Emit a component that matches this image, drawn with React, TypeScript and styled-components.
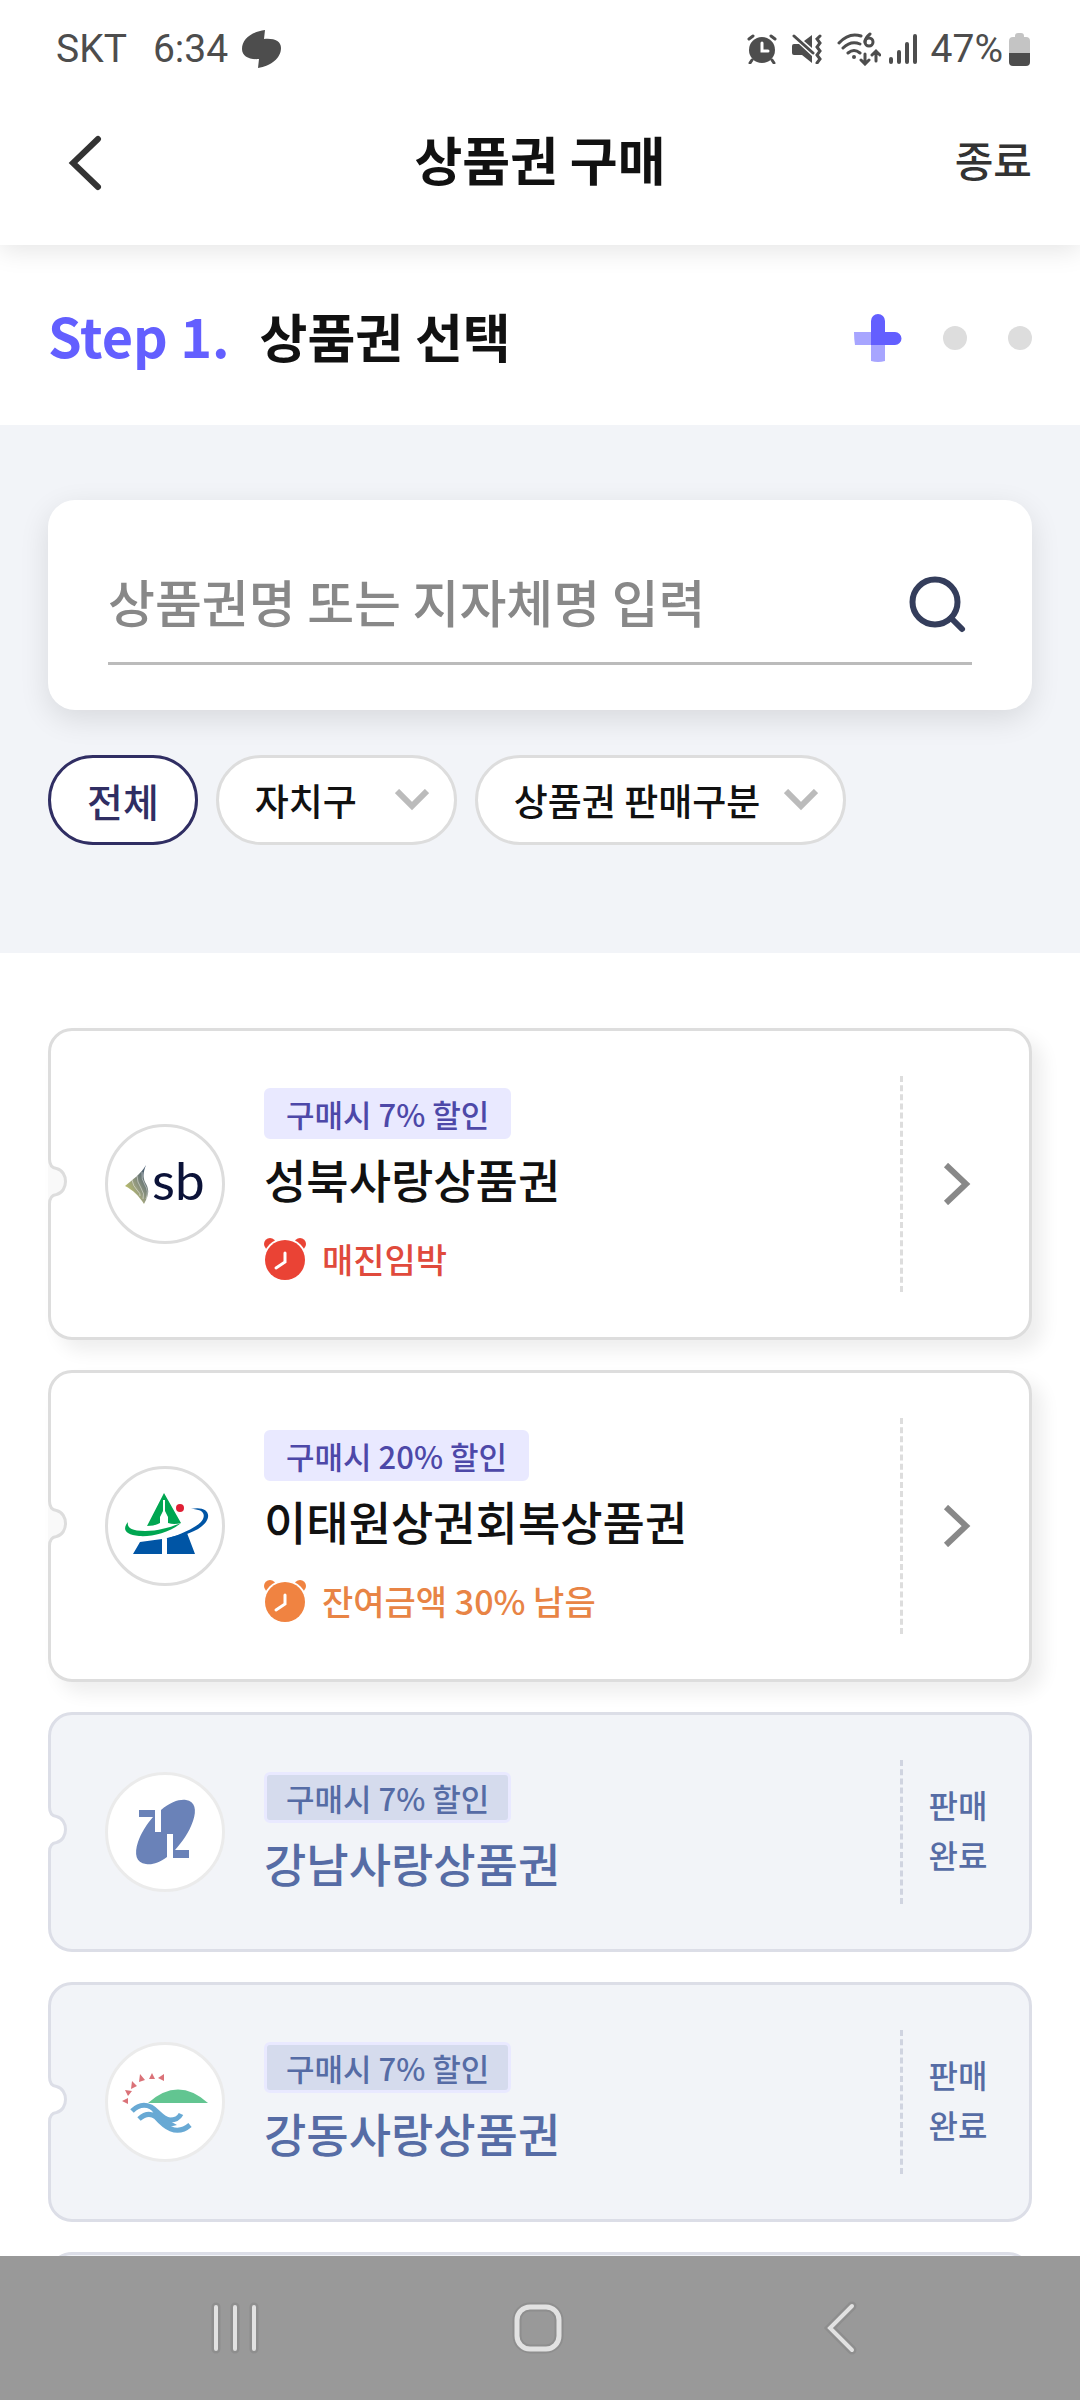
import React from "react";
import styled, { createGlobalStyle, css } from "styled-components";

const GlobalStyle = createGlobalStyle`
  *, *::before, *::after { box-sizing: border-box; }
  body {
    margin: 0;
    background: #fff;
    color: #111;
    font-family: "Noto Sans CJK KR", "Noto Sans", sans-serif;
    font-weight: 500;
  }
  button, input, select { font: inherit; color: inherit; }
  h1, h2, h3, p, ul, ol { margin: 0; padding: 0; font-weight: inherit; }
  svg { display: block; flex: none; }
`;

const Screen = styled.div`
  display: flex;
  flex-direction: column;
  height: 100vh;
  overflow: hidden;
`;

const TopArea = styled.header`
  flex: none;
  position: relative;
  z-index: 1;
  background: #fff;
  box-shadow: 0 6px 24px rgba(0, 0, 0, 0.1);
`;

const StatusBar = styled.div`
  display: flex;
  align-items: center;
  justify-content: space-between;
  height: 98px;
  padding: 0 50px 0 56px;
  color: #4d4d4d;
  font-family: Roboto, sans-serif;
  font-weight: 400;
  font-size: 39px;
  line-height: 48px;
`;

const StatusGroup = styled.div<{ $gap: number }>`
  display: flex;
  align-items: center;
  gap: ${(p) => p.$gap}px;
`;

const TitleBar = styled.div`
  display: grid;
  grid-template-columns: 1fr auto 1fr;
  align-items: center;
  height: 147px;
  padding: 0 48px 26px;
`;

const PlainButton = styled.button`
  display: flex;
  align-items: center;
  padding: 0;
  border: 0;
  background: none;
  cursor: pointer;
`;

const BackButton = styled(PlainButton)`
  justify-self: start;
  padding: 8px 20px 0;
`;

const CloseButton = styled(PlainButton)`
  justify-self: end;
  color: #333;
  font-size: 42px;
  line-height: 60px;
`;

const PageTitle = styled.h1`
  font-size: 52px;
  font-weight: 700;
  line-height: 72px;
`;

const StepBar = styled.section`
  flex: none;
  display: flex;
  align-items: center;
  justify-content: space-between;
  height: 180px;
  padding: 0 48px;
`;

const StepTitle = styled.h2`
  display: flex;
  align-items: baseline;
  gap: 30px;
  font-size: 52px;
  font-weight: 700;
  line-height: 72px;
`;

const StepNumber = styled.span`
  color: #635fff;
  font-size: 54px;
`;

const StepDots = styled.div`
  display: flex;
  align-items: center;
  gap: 41px;
  padding-top: 6px;
`;

const Dot = styled.span`
  width: 24px;
  height: 24px;
  border-radius: 50%;
  background: #ddd;
`;

const SearchArea = styled.section`
  flex: none;
  display: flex;
  flex-direction: column;
  gap: 45px;
  padding: 75px 48px 108px;
  background: #f2f4f8;
`;

const SearchCard = styled.form`
  padding: 39px 60px 45px;
  border-radius: 27px;
  background: #fff;
  box-shadow: 0 9px 30px rgba(0, 0, 0, 0.11);
`;

const SearchField = styled.div`
  display: flex;
  align-items: center;
  height: 126px;
  border-bottom: 3px solid #bbb;
`;

const SearchInput = styled.input`
  flex: 1;
  min-width: 0;
  height: 76px;
  padding: 0;
  border: 0;
  outline: 0;
  background: none;
  font-size: 51px;
  &::placeholder { color: #888; opacity: 1; }
`;

const SearchButton = styled(PlainButton)`
  padding-top: 8px;
`;

const Chips = styled.div`
  display: flex;
  gap: 18px;
`;

const chip = css`
  height: 90px;
  border: 3px solid #ddd;
  border-radius: 45px;
  background: #fff;
  line-height: 60px;
`;

const AllChip = styled.button`
  ${chip}
  padding: 0 36px;
  border-color: #302e63;
  color: #302e63;
  font-size: 39px;
`;

const SelectWrap = styled.div`
  display: grid;
  align-items: center;
  > * { grid-area: 1 / 1; }
  > svg { justify-self: end; margin-right: 28px; pointer-events: none; }
`;

const ChipSelect = styled.select<{ $room: number }>`
  ${chip}
  appearance: none;
  padding: 0 ${(p) => p.$room}px 0 36px;
  color: #111;
  font-size: 37px;
`;

const List = styled.ul`
  flex: 1;
  min-height: 0;
  overflow: hidden;
  display: flex;
  flex-direction: column;
  gap: 30px;
  padding: 75px 48px 0;
  list-style: none;
`;

const Row = styled.li`
  flex: none;
`;

const Ticket = styled.a<{ $sold?: boolean }>`
  position: relative;
  display: flex;
  align-items: center;
  min-height: ${(p) => (p.$sold ? 240 : 312)}px;
  padding: 45px 0 45px 54px;
  border: 3px solid ${(p) => (p.$sold ? "#dcdee7" : "#ddd")};
  border-radius: 24px;
  background: ${(p) => (p.$sold ? "#f2f4f8" : "#fff")};
  box-shadow: ${(p) => (p.$sold ? "none" : "11px 11px 18px rgba(0, 0, 0, 0.07)")};
  color: ${(p) => (p.$sold ? "#566ca5" : "#111")};
  text-decoration: none;
`;

const Notch = styled.svg`
  position: absolute;
  left: -3px;
  top: 50%;
  margin-top: -26px;
`;

const Logo = styled.div<{ $sold?: boolean }>`
  flex: none;
  width: 120px;
  height: 120px;
  border: 3px solid ${(p) => (p.$sold ? "#ebebeb" : "#ddd")};
  border-radius: 50%;
  background: #fff;
  overflow: hidden;
  > svg { margin: -3px; }
`;

const Info = styled.div`
  flex: 1;
  min-width: 0;
  display: flex;
  flex-direction: column;
  align-items: flex-start;
  padding-left: 39px;
`;

const Badge = styled.span<{ $sold?: boolean }>`
  height: 51px;
  padding: 0 19px;
  border: 3px solid #e9e9ff;
  border-radius: 6px;
  background: ${(p) => (p.$sold ? "#d5dbed" : "#e9e9ff")};
  color: ${(p) => (p.$sold ? "#566ca5" : "#4d48a8")};
  font-size: 31px;
  line-height: 45px;
`;

const Name = styled.h3`
  margin-top: 9px;
  font-size: 46px;
  line-height: 60px;
`;

const Remain = styled.p<{ $color: string }>`
  display: flex;
  align-items: center;
  gap: 16px;
  margin-top: 30px;
  color: ${(p) => p.$color};
  font-size: 34px;
  line-height: 42px;
`;

const Side = styled.div<{ $sold?: boolean }>`
  align-self: stretch;
  flex: none;
  display: flex;
  align-items: center;
  justify-content: center;
  width: 129px;
  padding-right: 16px;
  border-left: 3px dashed ${(p) => (p.$sold ? "#d0d4e0" : "#ddd")};
  text-align: center;
`;

const SoldText = styled.span`
  padding-bottom: 6px;
  font-size: 32px;
  line-height: 50px;
`;

const NavBar = styled.nav`
  flex: none;
  position: relative;
  display: flex;
  height: 144px;
  padding: 0 87px 0 83px;
  background: #999;
`;

const NavButton = styled(PlainButton)`
  flex: 1;
  justify-content: center;
`;

const AppMark = () => (
  <svg width="39" height="38" viewBox="0 0 39 38" fill="#4d4d4d">
    <path d="M23 0C9 2 0 9 0 19c0 7 7 11 17 10l-1 9c13-2 23-10 23-20 0-7-7-10-17-9z" />
  </svg>
);

const AlarmStatus = () => (
  <svg width="30" height="30" viewBox="0 0 30 30" fill="none" stroke="#4d4d4d" strokeLinecap="round">
    <circle cx="15" cy="16" r="13" fill="#4d4d4d" stroke="none" />
    <path d="M2 5l4-3M28 5l-4-3M5 26l-2 3M25 26l2 3" strokeWidth="3" />
    <path d="M15 9v8h6" stroke="#fff" strokeWidth="3" />
  </svg>
);

const MuteStatus = () => (
  <svg width="30" height="30" viewBox="0 0 30 30" fill="#4d4d4d">
    <path d="M0 12q0-2 2-2h5l13 12v7l-10-8H2q-2 0-2-2zM20 1v13l-8-7z" />
    <path d="M2 2l19 17M28 2l-3 3 3 4-3 4 3 4-3 4 3 4-3 4" fill="none" stroke="#4d4d4d" strokeWidth="3" strokeLinecap="round" />
  </svg>
);

const WifiStatus = () => (
  <svg width="44" height="34" viewBox="0 0 44 34" fill="none" stroke="#4d4d4d" strokeWidth="3" strokeLinecap="round">
    <path d="M2 11Q12 0 24 4M6 16q8-8 17-4M11 21q6-5 12 0" />
    <circle cx="17" cy="25" r="2" fill="#4d4d4d" stroke="none" />
    <path d="M33 2q-5 4-5 8" />
    <circle cx="32" cy="10" r="4" />
    <path d="M28 22v9M24 28l4 4 4-4M39 29v-9M35 23l4-4 4 4" />
  </svg>
);

const SignalStatus = () => (
  <svg width="28" height="30" viewBox="0 0 28 30" stroke="#4d4d4d" strokeWidth="4" strokeLinecap="round">
    <path d="M2 25v3M10 18v10M18 10v18M26 2v26" />
  </svg>
);

const BatteryStatus = () => (
  <svg width="21" height="33" viewBox="0 0 21 33">
    <path d="M6 3q0-3 3-3h3q3 0 3 3v1h2q4 0 4 4v13H0V8q0-4 4-4h2z" fill="#c4c4c4" />
    <path d="M0 20h21v9q0 4-4 4H4q-4 0-4-4z" fill="#4d4d4d" />
  </svg>
);

const BackArrow = () => (
  <svg width="34" height="56" viewBox="0 0 34 56" fill="none" stroke="#333" strokeWidth="6" strokeLinecap="round">
    <path d="M30 4L5 28l25 24" />
  </svg>
);

const PlusMark = () => (
  <svg width="48" height="48" viewBox="0 0 48 48">
    <path d="M0 18h24v13H1q-1-6-1-13zM17 24h14v23q-7 2-14 0z" fill="#a7a5ff" />
    <path d="M17 7a7 7 0 0 1 14 0v11h10a6 6 0 0 1 0 13H17z" fill="#635fff" />
  </svg>
);

const SearchIcon = () => (
  <svg width="64" height="60" viewBox="0 0 64 60" fill="none" stroke="#343d5b" strokeWidth="6">
    <circle cx="27" cy="27" r="22.5" />
    <path d="M43 43l11 11" strokeLinecap="round" />
  </svg>
);

const ChipArrow = () => (
  <svg width="34" height="22" viewBox="0 0 34 22" fill="none" stroke="#bbb" strokeWidth="6">
    <path d="M2 2l15 15L32 2" />
  </svg>
);

const RowArrow = () => (
  <svg width="32" height="42" viewBox="0 0 32 42" fill="none" stroke="#888" strokeWidth="6">
    <path d="M4 2l20 19L4 40" />
  </svg>
);

const AlarmClock = ({ color }: { color: string }) => (
  <svg width="42" height="42" viewBox="0 0 42 42">
    <circle cx="6" cy="6" r="6" fill={color} />
    <circle cx="36" cy="6" r="6" fill={color} />
    <circle cx="21" cy="22" r="22" fill="#fff" />
    <circle cx="21" cy="22" r="20" fill={color} />
    <path d="M21 15v9l-9 6" fill="none" stroke="#fff" strokeWidth="3" strokeLinecap="round" />
  </svg>
);

const CardNotch = ({ sold }: { sold?: boolean }) => (
  <Notch width="22" height="48" viewBox="0 0 22 48">
    <path
      d="M0 1h1.500c0 6 3 9 7 9.500 12 3 12 23 0 26-4 .5-7 3.500-7 9.500H0z"
      fill={sold ? "#fff" : "#f9f9f9"}
    />
    <path
      d="M1.500 0v1c0 6 3 9 7 9.500 12 3 12 23 0 26-4 .5-7 3.500-7 9.500v2"
      fill="none"
      stroke={sold ? "#dcdee7" : "#ddd"}
      strokeWidth="3"
    />
  </Notch>
);

const SeongbukLogo = () => (
  <svg width="120" height="120" viewBox="0 0 120 120">
    <defs>
      <linearGradient id="leaf" x1="0" y1="1" x2="1" y2="0">
        <stop offset="0" stopColor="#d5d94e" />
        <stop offset="0.45" stopColor="#9a9f80" />
        <stop offset="1" stopColor="#2c4468" />
      </linearGradient>
    </defs>
    <path d="M41 41c-5 9-14 15-21 21 8 4 14 10 19 18 6-11 5-15 1-22-2-5-2-9 1-17z" fill="url(#leaf)" />
    <path d="M37 48q-1 7 3 13t1 14M32 52q0 6 4 12t2 11M27 56q1 6 5 10t3 6" fill="none" stroke="#fff" strokeOpacity="0.45" />
    <text x="47" y="76" fontFamily="Lato, sans-serif" fontSize="53" fontWeight="400" fill="#0b1238">sb</text>
  </svg>
);

const ItaewonLogo = () => (
  <svg width="120" height="120" viewBox="0 0 120 120">
    <path d="M59 27L42 60q8 0 13-3V51l3-6V34h2v11l3 6v6q6 2 13 0z" fill="#00a651" />
    <path d="M23 56c-1 5 2 9 17 9 14 0 26-4 36-8-12 10-30 14-42 13-14-1-17-7-11-14z" fill="#00a651" />
    <path d="M86 43c14-3 21 4 15 13-6 8-20 14-40 17 22-7 34-14 37-20 3-7-3-10-12-10z" fill="#0055a5" />
    <path d="M35 76l22-3v15H28zM62 72l20-5 8 21H62z" fill="#0055a5" />
    <circle cx="75" cy="42" r="4" fill="#e01f35" />
  </svg>
);

const GangnamLogo = () => (
  <svg width="120" height="120" viewBox="0 0 120 120">
    <path
      d="M56 38c9-8 19-11 25-10 9 1 11 10 7 21-4 12-11 21-18 29h14v8H68V62h-6v23c-8 6-15 8-21 7-10-1-12-10-8-22 3-9 9-18 15-25H34v-7h16v22h6z"
      fill="#6a82b8"
    />
  </svg>
);

const GangdongLogo = () => (
  <svg width="120" height="120" viewBox="0 0 120 120">
    <path d="M43 61q30-27 60 0z" fill="#62c591" />
    <path d="M17 59l6-3v6zM20 48l7 1-4 5zM27 39l5 5-6 3zM35 32l5 6-6 2zM47 31l3 6h-6zM59 32v7l-6-3z" fill="#da7278" />
    <path d="M27 69q9-9 19-4c7 4 11 12 19 13q8 0 11-6M34 77q9-8 17-2c8 9 20 20 34 8" fill="none" stroke="#68a9d4" strokeWidth="5" />
    <path d="M44 63l12 11 16 9-8 2-14-11z" fill="#68a9d4" />
  </svg>
);

type Voucher = {
  name: string;
  rate: string;
  logo: React.ReactNode;
  remain?: { text: string; textColor: string; iconColor: string };
};

const vouchers: Voucher[] = [
  {
    name: "성북사랑상품권",
    rate: "7%",
    logo: <SeongbukLogo />,
    remain: { text: "매진임박", textColor: "#e04a3c", iconColor: "#ea4335" },
  },
  {
    name: "이태원상권회복상품권",
    rate: "20%",
    logo: <ItaewonLogo />,
    remain: { text: "잔여금액 30% 남음", textColor: "#e88445", iconColor: "#f08341" },
  },
  { name: "강남사랑상품권", rate: "7%", logo: <GangnamLogo /> },
  { name: "강동사랑상품권", rate: "7%", logo: <GangdongLogo /> },
];

const VoucherCard = ({ voucher }: { voucher: Voucher }) => {
  const sold = !voucher.remain;
  return (
    <Ticket $sold={sold} as={sold ? "div" : "a"} href={sold ? undefined : "#"}>
      <CardNotch sold={sold} />
      <Logo $sold={sold}>{voucher.logo}</Logo>
      <Info>
        <Badge $sold={sold}>구매시 {voucher.rate} 할인</Badge>
        <Name>{voucher.name}</Name>
        {voucher.remain && (
          <Remain $color={voucher.remain.textColor}>
            <AlarmClock color={voucher.remain.iconColor} />
            {voucher.remain.text}
          </Remain>
        )}
      </Info>
      <Side $sold={sold}>
        {sold ? (
          <SoldText>
            판매
            <br />
            완료
          </SoldText>
        ) : (
          <RowArrow />
        )}
      </Side>
    </Ticket>
  );
};

export default function App() {
  return (
    <Screen>
      <GlobalStyle />
      <TopArea>
        <StatusBar>
          <StatusGroup $gap={14}>
            <StatusGroup $gap={26}>
              <span>SKT</span>
              <span>6:34</span>
            </StatusGroup>
            <AppMark />
          </StatusGroup>
          <StatusGroup $gap={8}>
            <StatusGroup $gap={15}>
              <AlarmStatus />
              <MuteStatus />
              <WifiStatus />
            </StatusGroup>
            <StatusGroup $gap={14}>
              <SignalStatus />
              <StatusGroup $gap={6}>
                <span>47%</span>
                <BatteryStatus />
              </StatusGroup>
            </StatusGroup>
          </StatusGroup>
        </StatusBar>
        <TitleBar>
          <BackButton type="button" aria-label="뒤로">
            <BackArrow />
          </BackButton>
          <PageTitle>상품권 구매</PageTitle>
          <CloseButton type="button">종료</CloseButton>
        </TitleBar>
      </TopArea>

      <StepBar>
        <StepTitle>
          <StepNumber>Step 1.</StepNumber>
          상품권 선택
        </StepTitle>
        <StepDots>
          <PlusMark />
          <Dot />
          <Dot />
        </StepDots>
      </StepBar>

      <SearchArea>
        <SearchCard onSubmit={(e) => e.preventDefault()}>
          <SearchField>
            <SearchInput type="text" aria-label="상품권명 또는 지자체명 입력" placeholder="상품권명 또는 지자체명 입력" />
            <SearchButton type="submit" aria-label="검색">
              <SearchIcon />
            </SearchButton>
          </SearchField>
        </SearchCard>
        <Chips>
          <AllChip type="button">전체</AllChip>
          <SelectWrap>
            <ChipSelect aria-label="자치구" $room={96}>
              <option>자치구</option>
            </ChipSelect>
            <ChipArrow />
          </SelectWrap>
          <SelectWrap>
            <ChipSelect aria-label="상품권 판매구분" $room={82}>
              <option>상품권 판매구분</option>
            </ChipSelect>
            <ChipArrow />
          </SelectWrap>
        </Chips>
      </SearchArea>

      <List>
        {vouchers.map((v) => (
          <Row key={v.name}>
            <VoucherCard voucher={v} />
          </Row>
        ))}
        <Row>
          <Ticket as="div" $sold />
        </Row>
      </List>

      <NavBar>
        <NavButton type="button" aria-label="최근 앱">
          <svg width="48" height="52" viewBox="0 0 48 52" fill="none" strokeLinecap="round">
            <path d="M5 5v42M24 5v42M43 5v42" stroke="#8e8e8e" strokeWidth="9" />
            <path d="M5 5v42M24 5v42M43 5v42" stroke="#e2e2e2" strokeWidth="4" />
          </svg>
        </NavButton>
        <NavButton type="button" aria-label="홈">
          <svg width="52" height="52" viewBox="0 0 52 52" fill="none">
            <rect x="5" y="5" width="42" height="42" rx="13" stroke="#8e8e8e" strokeWidth="9" />
            <rect x="5" y="5" width="42" height="42" rx="13" stroke="#e2e2e2" strokeWidth="5" />
          </svg>
        </NavButton>
        <NavButton type="button" aria-label="이전">
          <svg width="34" height="56" viewBox="0 0 34 56" fill="none" strokeLinecap="round">
            <path d="M28 6L6 28l22 22" stroke="#8e8e8e" strokeWidth="9" />
            <path d="M28 6L6 28l22 22" stroke="#e2e2e2" strokeWidth="4" />
          </svg>
        </NavButton>
      </NavBar>
    </Screen>
  );
}
